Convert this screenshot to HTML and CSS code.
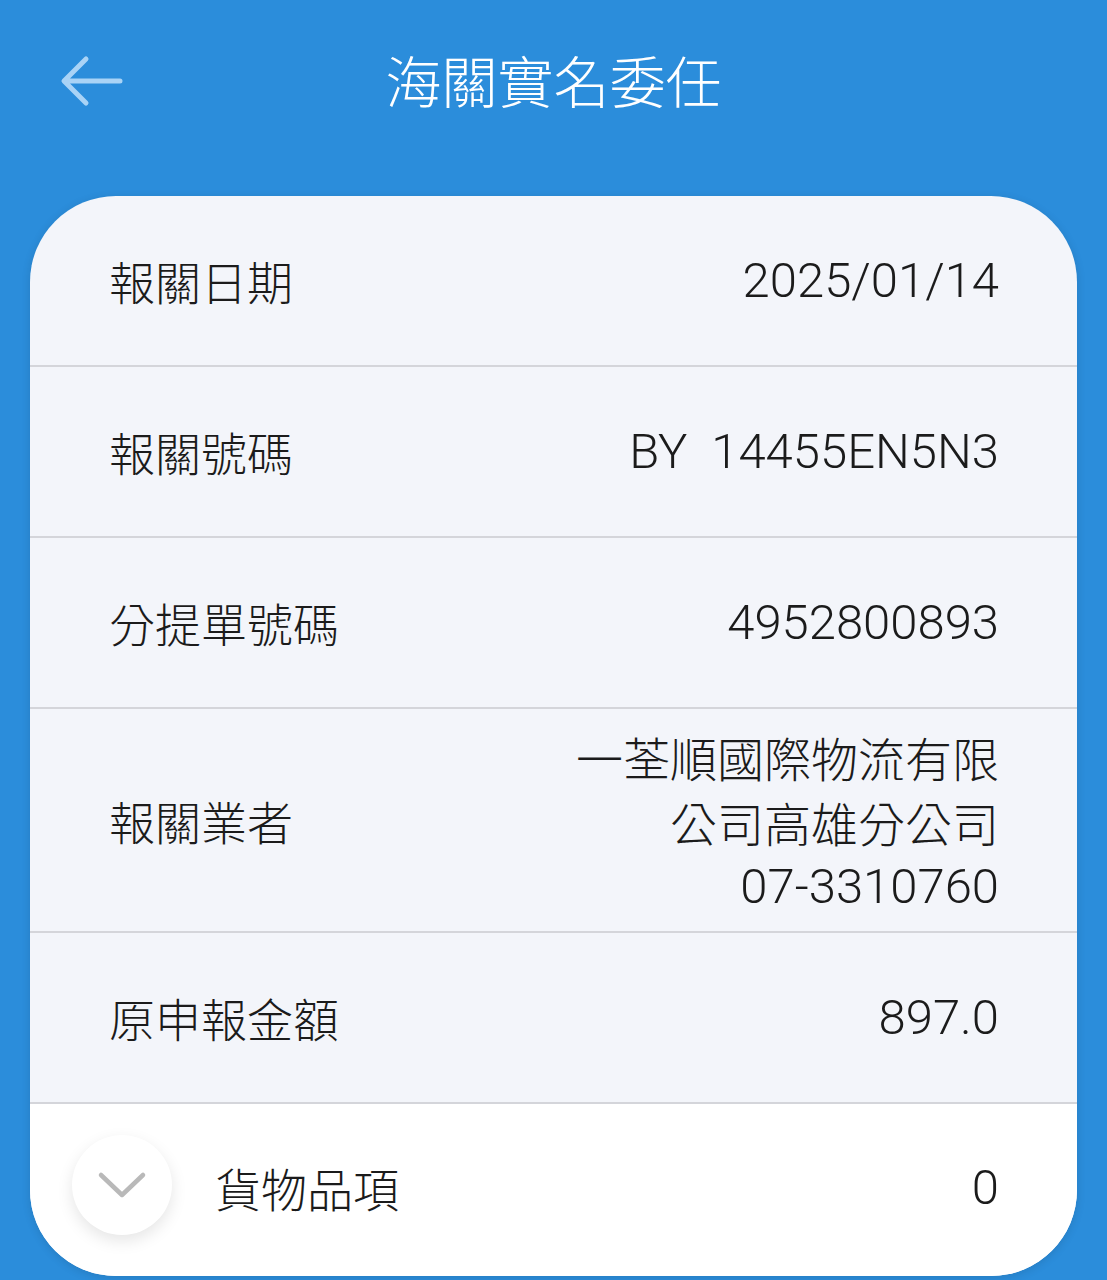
FILE: index.html
```html
<!DOCTYPE html>
<html lang="zh-Hant">
<head>
  <meta charset="UTF-8">
  <meta name="viewport" content="width=device-width, initial-scale=1.0">
  <title>海關實名委任</title>
  <link rel="stylesheet" href="styles.css">
</head>
<body>
  <header class="topbar">
    <button class="back" type="button" aria-label="返回">
      <svg width="64" height="56" viewBox="0 0 64 56">
        <path d="M60 26 H5 M26 4 L4 26 L26 48" fill="none" stroke="#a9d3f6" stroke-width="5" stroke-linecap="round" stroke-linejoin="round"/>
      </svg>
    </button>
    <h1 class="title">海關實名委任</h1>
  </header>

  <main class="card">
    <div class="row">
      <span class="label">報關日期</span>
      <span class="value">2025/01/14</span>
    </div>
    <div class="row">
      <span class="label">報關號碼</span>
      <span class="value keep">BY  14455EN5N3</span>
    </div>
    <div class="row">
      <span class="label">分提單號碼</span>
      <span class="value">4952800893</span>
    </div>
    <div class="row row-tall">
      <span class="label">報關業者</span>
      <span class="value multi">
        <span class="company">一荃順國際物流有限公司高雄分公司</span>
        <span class="phone">07-3310760</span>
      </span>
    </div>
    <div class="row">
      <span class="label">原申報金額</span>
      <span class="value">897.0</span>
    </div>
    <div class="row row-items">
      <button class="toggle" type="button" aria-label="展開">
        <svg width="50" height="30" viewBox="0 0 50 30">
          <path d="M4 5 L25 25 L46 5" fill="none" stroke="#b9b9b9" stroke-width="4.5" stroke-linecap="round" stroke-linejoin="round"/>
        </svg>
      </button>
      <span class="label">貨物品項</span>
      <span class="value">0</span>
    </div>
  </main>
</body>
</html>
```

FILE: styles.css
```css
html,
body {
  margin: 0;
  height: 100%;
}

body {
  background-color: #2b8ddb;
  font-family: Roboto, "Noto Sans CJK TC", sans-serif;
  font-weight: 300;
  color: #1b1b1b;
  overflow: hidden;
}

.topbar {
  position: relative;
  height: 196px;
  display: flex;
  justify-content: center;
}

.back {
  position: absolute;
  left: 60px;
  top: 55px;
  padding: 0;
  border: none;
  background: none;
  line-height: 0;
}

.title {
  margin: 44px 0 0;
  height: 70px;
  font-family: "Noto Sans CJK TC", sans-serif;
  font-size: 56px;
  font-weight: 300;
  line-height: 70px;
  color: #ffffff;
}

.card {
  margin: 0 30px;
  height: 1080px;
  background-color: #f3f5fa;
  border-radius: 86px;
  overflow: hidden;
  box-shadow: 0 2px 10px rgba(0, 0, 0, 0.12);
}

.row {
  height: 171px;
  padding: 0 78px 0 79px;
  display: flex;
  align-items: center;
  justify-content: space-between;
  border-bottom: 2px solid #d4d5da;
  box-sizing: border-box;
  font-size: 49px;
  line-height: 65px;
}

.row-tall {
  height: 224px;
}

.label {
  font-family: "Noto Sans CJK TC", sans-serif;
  font-size: 46px;
  white-space: nowrap;
}

.value {
  text-align: right;
}

.keep {
  white-space: pre;
}

.multi {
  width: 440px;
  padding-top: 2px;
}

.company {
  display: block;
  font-family: "Noto Sans CJK TC", sans-serif;
  font-size: 47px;
}

.phone {
  display: block;
}

.row-items {
  height: 172px;
  padding-left: 42px;
  padding-bottom: 10px;
  background-color: #ffffff;
  border-bottom: none;
  justify-content: flex-start;
}

.row-items .label {
  margin-left: 43px;
  padding-top: 4px;
}

.row-items .value {
  margin-left: auto;
  padding-top: 4px;
}

.toggle {
  width: 100px;
  height: 100px;
  padding: 0;
  border: none;
  border-radius: 50%;
  background-color: #ffffff;
  box-shadow: 0 6px 16px rgba(0, 0, 0, 0.1);
  display: flex;
  align-items: center;
  justify-content: center;
}
```
